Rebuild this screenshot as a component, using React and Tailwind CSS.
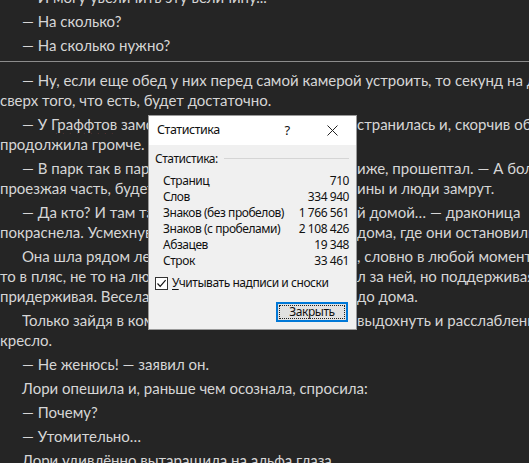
function Line({ children, indent, right }) {
  return (
    <div className={"flex whitespace-nowrap h-[20px] leading-[20px]" + (indent ? " pl-[22px]" : "")}>
      {right !== undefined ? (
        <>
          <span className={(indent ? "w-[126px] mr-[209px]" : "w-[148px] mr-[209px]") + " shrink-0 overflow-hidden"}>
            {children}
          </span>
          <span>{right}</span>
        </>
      ) : (
        <span>{children}</span>
      )}
    </div>
  );
}

function Para({ children }) {
  return <div className="mb-[4px]">{children}</div>;
}

function Document() {
  return (
    <div className="-mt-[13px] w-[600px] text-[15px] text-[#d6d6d6] font-['Lato','Liberation_Sans',sans-serif]">
      <Para>
        <Line indent>— И могу увеличить эту величину...</Line>
      </Para>
      <Para>
        <Line indent>— На сколько?</Line>
      </Para>
      <Para>
        <Line indent>— На сколько нужно?</Line>
      </Para>
      <div className="mt-[6px] mb-[8px] border-t border-[#8c8c8c]" />
      <Para>
        <Line indent>— Ну, если еще обед у них перед самой камерой устроить, то секунд на десять</Line>
        <Line>сверх того, что есть, будет достаточно.</Line>
      </Para>
      <Para>
        <Line indent right="странилась и, скорчив обиженную мину,">
          — У{" "}
          <span className="underline decoration-wavy decoration-[#e0524a] decoration-1 underline-offset-[3px]">
            Граффтов
          </span>{" "}
          замок
        </Line>
        <Line>продолжила громче.</Line>
      </Para>
      <Para>
        <Line indent right="иже, прошептал. — А больше">
          — В парк так в парк
        </Line>
        <Line right="ины и люди замрут.">проезжая часть, будет</Line>
      </Para>
      <Para>
        <Line indent right="й домой… — драконица">
          — Да кто? И там так
        </Line>
        <Line right="дома, где они остановились">покраснела. Усмехнувшись</Line>
      </Para>
      <Para>
        <Line indent right=", словно в любой момент">
          Она шла рядом легко
        </Line>
        <Line right="л за ней, но поддерживая">то в пляс, не то на люди</Line>
        <Line right="до дома.">придерживая. Веселая</Line>
      </Para>
      <Para>
        <Line indent right="выдохнуть и расслабленно">
          Только зайдя в комнату
        </Line>
        <Line>кресло.</Line>
      </Para>
      <Para>
        <Line indent>— Не женюсь! — заявил он.</Line>
      </Para>
      <Para>
        <Line indent>Лори опешила и, раньше чем осознала, спросила:</Line>
      </Para>
      <Para>
        <Line indent>— Почему?</Line>
      </Para>
      <Para>
        <Line indent>— Утомительно…</Line>
      </Para>
      <Para>
        <Line indent>Лори удивлённо вытаращила на альфа глаза.</Line>
      </Para>
    </div>
  );
}

const stats = [
  ["Страниц", "710"],
  ["Слов", "334 940"],
  ["Знаков (без пробелов)", "1 766 561"],
  ["Знаков (с пробелами)", "2 108 426"],
  ["Абзацев", "19 348"],
  ["Строк", "33 461"],
];

function StatsDialog() {
  return (
    <div className="absolute left-[148px] top-[115px] w-[209px] h-[215px] flex flex-col bg-[#f0f0f0] border border-[#9a9a9a] text-[12px] tracking-[-0.45px] text-[#111] font-['Noto_Sans','Open_Sans',sans-serif]">
      <div className="h-[29px] shrink-0 bg-white flex items-center pl-[8px]">
        <span className="flex-1 text-[12.5px]">Статистика</span>
        <span className="w-[20px] text-center text-[13px] mr-[30px]">?</span>
        <svg width="11" height="11" viewBox="0 0 11 11" className="mr-[18px]">
          <path d="M0.5 0.5 L10.5 10.5 M10.5 0.5 L0.5 10.5" stroke="#222" strokeWidth="1" />
        </svg>
      </div>
      <div className="flex-1 flex flex-col pt-[6px] px-[6px]">
        <div className="flex items-center h-[16px] leading-[16px]">
          <span>Статистика:</span>
          <div className="flex-1 ml-[6px] mr-[1px] -mt-[2px] border-t border-[#d5d5d5]" />
        </div>
        <div className="mt-[6px] pl-[8px] pr-[1px]">
          {stats.map(([k, v]) => (
            <div key={k} className="flex justify-between h-[16px] leading-[16px]">
              <span>{k}</span>
              <span>{v}</span>
            </div>
          ))}
        </div>
        <div className="mt-[6px] flex items-center h-[16px]">
          <div className="w-[13px] h-[13px] bg-white border border-[#333] flex items-center justify-center">
            <svg width="11" height="11" viewBox="0 0 11 11">
              <path d="M1.5 5.5 L4.2 8.3 L9.6 2.2" stroke="#111" strokeWidth="1.2" fill="none" />
            </svg>
          </div>
          <span className="ml-[4px]">
            <span className="underline underline-offset-2">У</span>читывать надписи и сноски
          </span>
        </div>
        <div className="mt-[11px] flex justify-end pr-[2px]">
          <div className="w-[72px] h-[20px] border-2 border-[#0078d7] bg-[#e1e1e1] p-[1px]">
            <div className="w-full h-full border border-dotted border-[#222] flex items-center justify-center leading-none">
              Закрыть
            </div>
          </div>
        </div>
      </div>
    </div>
  );
}

export default function App() {
  return (
    <div className="relative w-[529px] h-[463px] overflow-hidden bg-[#252525]">
      <Document />
      <StatsDialog />
    </div>
  );
}
